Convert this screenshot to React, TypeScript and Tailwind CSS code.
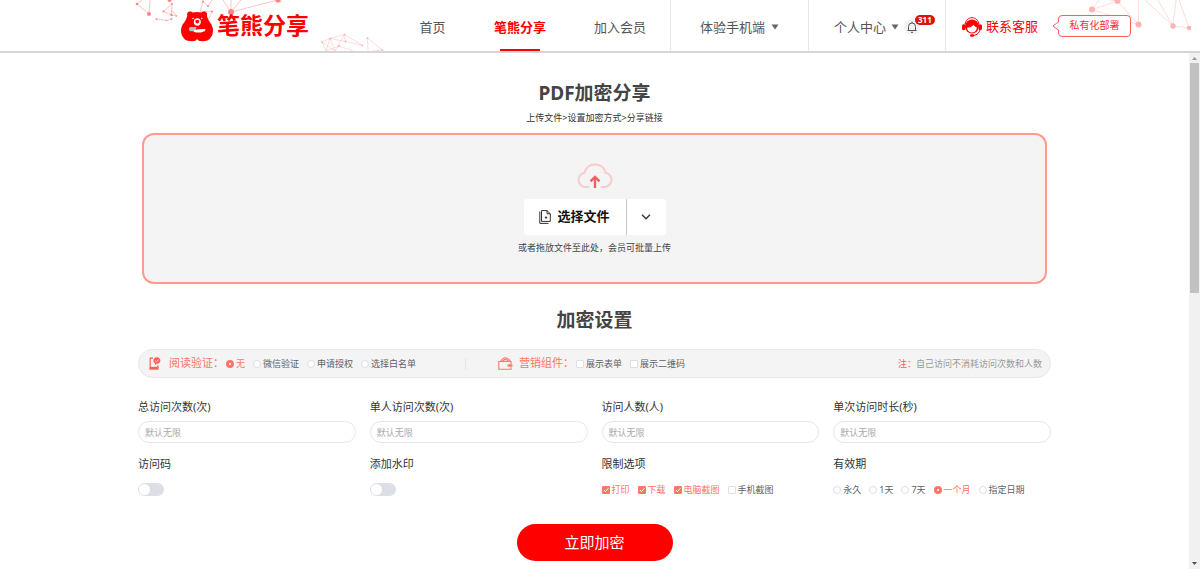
import React from "react";

function Mesh({ dots, lines }: { dots: number[][]; lines: string[] }) {
  return (
    <>
      {lines.map((d) => (
        <path key={d} d={d} fill="none" stroke="currentColor" strokeWidth="0.8" opacity="0.6" />
      ))}
      {dots.map(([x, y, r]) => (
        <circle key={`${x}-${y}`} cx={x} cy={y} r={r} fill="currentColor" />
      ))}
    </>
  );
}

function HeaderDecoration() {
  return (
    <div aria-hidden="true" className="pointer-events-none absolute inset-0 flex justify-between overflow-hidden">
      <svg width="400" height="51" viewBox="0 0 400 51" className="shrink-0">
        <g className="text-[#ff8585]">
          <Mesh
            dots={[[137, 4, 1.3], [149, 14, 2], [169.5, 0, 2], [172, 4, 1], [163.5, 11.5, 1], [171.5, 15, 1.2], [176.5, 16, 0.8], [156.5, 19, 0.9], [166.5, 20.5, 0.8], [171.5, 19, 0.9], [203, 1.5, 1], [208, 6, 1], [212, 11.5, 1], [231, 12, 3], [278, 0, 2.6]]}
            lines={["M137 4L149 14L150 0M137 4L142 0", "M172 4L163.5 11.5L171.5 15L172 4M171.5 15L176.5 16L171.5 10", "M156.5 19L166.5 20.5L171.5 19", "M200 11L203 1.5L208 6L212 0M200 11L212 11.5L208 20", "M231 12L223 0M231 12L231 0M231 12L241 0M231 12L278 0M278 0L282 2"]}
          />
        </g>
        <g className="text-[#ffb5b5]">
          <Mesh
            dots={[[322, 42, 0.9], [330, 38.5, 0.9], [344.5, 34.5, 0.9], [345.5, 41.5, 0.9], [339, 46, 0.9], [362.5, 45.5, 0.9], [367.5, 38, 0.9], [382.5, 50, 0.9]]}
            lines={["M322 42L330 38.5L344.5 34.5L362.5 45.5L345.5 41.5L344.5 34.5L335 51L330 38.5L326 51L322 42L335 51", "M330 38.5L345.5 41.5M326 51L339 46L353 51", "M367.5 38L368 51M367.5 38L382.5 50L372 51"]}
          />
        </g>
      </svg>
      <svg width="115" height="51" viewBox="1085 0 115 51" className="shrink-0 text-[#ffb3b3]">
        <Mesh
          dots={[[1092, 9.5, 3], [1117.5, 1, 3], [1138.5, 24.5, 3], [1173, 26, 2.7], [1189, 28, 2.2]]}
          lines={["M1099 0L1092 9.5L1117.5 1L1138.5 24.5V0", "M1092 9.5L1138.5 24.5", "M1110 0L1117.5 1", "M1145 0L1173 26L1158 0", "M1173 26L1176 0M1173 26L1189 28L1179 0"]}
        />
      </svg>
    </div>
  );
}

function BearLogo() {
  return (
    <svg width="32" height="32" viewBox="0 0 32 32" aria-hidden="true" className="shrink-0">
      <path
        fill="#fe0000"
        d="M6.300 5.600C5.400 2.800 7.600.900 10 1.600c.8.200 1.400.5 1.900.9 2.700-.8 5.700-.8 8.400 0 .5-.4 1.100-.7 1.900-.9 2.400-.7 4.600 1.200 3.700 4 .5 2.200 1.300 4.300 2.800 6.400C30.800 14.500 32 17.500 32 20.500c0 5-2.800 9.200-6.500 10.300-2.900.7-5.700.6-7.500 0-1-.5-1.300-1.600-1.900-1.600s-.9 1.100-1.900 1.600c-1.800.6-4.600.7-7.500 0C2.900 29.700 0 25.500 0 20.500c0-3 1.300-6 3.500-8.500 1.500-2.100 2.300-4.200 2.800-6.400Z"
      />
      <circle cx="12" cy="8.500" r="0.700" fill="#fff" />
      <circle cx="20.800" cy="8.500" r="0.700" fill="#fff" />
      <ellipse cx="16.300" cy="12" rx="3.500" ry="3.700" fill="#fff" />
      <path d="M14.300 11c0-1.200 4-1.200 4 0 0 1.300-1.100 2.600-2 2.600s-2-1.300-2-2.600Z" fill="#fe0000" />
      <path d="M8 18.800c0-1.500 1.200-2 3-1.800h4.500l-1 4.200H9.500c-1 0-1.500-.9-1.500-2.400Z" fill="#bdbdbd" />
      <path d="M12.500 20.500l4.500-1.200 7.500-.3c0 1.500-1 2.600-2.500 2.800l-2 .7h-4.500c-2 0-3-.8-3-2Z" fill="#fff" />
    </svg>
  );
}

function Caret() {
  return (
    <svg width="8" height="6" viewBox="0 0 8 6" aria-hidden="true">
      <path d="M.5.5h7L4 5.500Z" fill="#666" />
    </svg>
  );
}

function ServiceIcon() {
  return (
    <svg width="20" height="20" viewBox="0 0 20 20" aria-hidden="true">
      <path d="M3 7.500C3.400 3.300 6.400.700 10 .700s6.600 2.600 7 6.800" fill="none" stroke="#fe0000" strokeWidth="1" />
      <circle cx="10" cy="9.500" r="6.900" fill="#fe0000" />
      <path d="M5 10.800c2.700-.2 5.200-1.300 6.600-3.100.8 1.300 1.900 2.300 3.300 2.800-.2 3.100-2.300 5.100-4.900 5.100s-4.700-1.900-5-4.800Z" fill="#fff" />
      <rect x="0" y="7.200" width="3.400" height="6" rx="1.600" fill="#fe0000" />
      <rect x="16.600" y="7.200" width="3.400" height="6" rx="1.600" fill="#fe0000" />
      <path d="M18 12.500c-.5 3.300-2.800 5.500-6.500 6" fill="none" stroke="#fe0000" strokeWidth="1" />
      <rect x="8" y="17.300" width="4.200" height="2.500" rx="1.200" fill="#fe0000" />
    </svg>
  );
}

function Choice({ type, name, label, checked }: { type: "radio" | "checkbox"; name: string; label: string; checked?: boolean }) {
  return (
    <label className="flex cursor-pointer items-center gap-[2px] whitespace-nowrap text-[9px] leading-3 text-[#606266] has-[:checked]:text-[#ff7567]">
      {type === "radio" ? (
        <input
          type="radio"
          name={name}
          defaultChecked={checked}
          className="size-2 shrink-0 appearance-none rounded-full border border-[#dcdfe6] bg-white checked:border-[3px] checked:border-[#ff7567]"
        />
      ) : (
        <span className="grid shrink-0">
          <input
            type="checkbox"
            name={name}
            defaultChecked={checked}
            className="peer col-start-1 row-start-1 size-2 appearance-none rounded-[1px] border border-[#dcdfe6] bg-white checked:border-[#ff7567] checked:bg-[#ff7567]"
          />
          <svg viewBox="0 0 8 8" aria-hidden="true" className="pointer-events-none invisible col-start-1 row-start-1 size-2 peer-checked:visible">
            <path d="M1.800 4l1.600 1.600L6.300 2.400" fill="none" stroke="#fff" strokeWidth="1" />
          </svg>
        </span>
      )}
      {label}
    </label>
  );
}

function NumberField({ id, label }: { id: string; label: string }) {
  return (
    <div className="flex flex-col gap-[6px]">
      <label htmlFor={id} className="text-[11px] leading-4 text-[#333]">
        {label}
      </label>
      <input
        id={id}
        type="text"
        placeholder="默认无限"
        className="h-[22px] w-full rounded-full border border-[#e4e6eb] bg-white px-[6px] text-[9px] text-[#606266] placeholder:text-[#a8a8ab]"
      />
    </div>
  );
}

function SwitchField({ id, label }: { id: string; label: string }) {
  return (
    <div className="flex flex-col gap-[11px]">
      <label htmlFor={id} className="text-[11px] leading-4 text-[#333]">
        {label}
      </label>
      <input
        id={id}
        type="checkbox"
        role="switch"
        className="flex h-[13px] w-[26px] cursor-pointer appearance-none items-center rounded-full bg-[#dcdfe6] px-[1px] before:size-[11px] before:rounded-full before:bg-white checked:justify-end checked:bg-[#ff7567]"
      />
    </div>
  );
}

function ChoiceField({ label, children }: { label: string; children: React.ReactNode }) {
  return (
    <fieldset className="min-w-0">
      <legend className="mb-[11px] text-[11px] leading-4 text-[#333]">{label}</legend>
      <div className="flex h-[13px] items-center gap-2">{children}</div>
    </fieldset>
  );
}

function Header() {
  return (
    <header className="relative h-[53px] shrink-0 border-b-2 border-[#d6d6d6] bg-white">
      <HeaderDecoration />
      <div className="relative flex h-full pl-[15%] text-[13px] whitespace-nowrap text-[#555]">
        <a href="#home" className="ml-px flex w-[214px] shrink-0 items-center gap-1 text-[23px] font-bold text-[#fe0000]">
          <BearLogo />
          <span>笔熊分享</span>
        </a>
        <nav className="flex shrink-0 leading-5">
          <a href="#home" className="flex w-[75px] items-center justify-center pt-[2px]">首页</a>
          <a href="#share" aria-current="page" className="flex w-[100px] flex-col items-center font-bold text-[#fe0000]">
            <span className="flex flex-1 items-center pt-1">笔熊分享</span>
            <span className="h-[2px] w-10 bg-[#fe0000]" />
          </a>
          <a href="#vip" className="flex w-[100px] items-center justify-center pt-[2px]">加入会员</a>
          <a href="#mobile" className="flex w-[138px] items-center justify-center gap-[6px] border-l border-[#e8e8e8] pt-[2px]">
            体验手机端
            <Caret />
          </a>
          <div className="flex w-[138px] items-center justify-end border-x border-[#e8e8e8] pt-[2px] pr-[25px]">
            <a href="#user" className="flex items-center gap-[5px]">
              个人中心
              <Caret />
            </a>
            <button type="button" aria-label="消息" className="relative ml-[5px] grid size-4 place-items-center rounded-full bg-[#f2f2f2]">
              <svg width="12" height="12" viewBox="0 0 12 12" aria-hidden="true" fill="none" stroke="#555" strokeWidth="1">
                <path d="M1.500 9.500h9M2.500 9.500V5.500a3.500 3.500 0 0 1 7 0v4M6 2V.6M5 11.300h2" />
              </svg>
              <span className="absolute -top-1 left-[11px] rounded-full bg-[#d9150b] px-[3px] text-[8px] leading-[10px] font-bold text-white">311</span>
            </button>
          </div>
        </nav>
        <a href="#service" className="ml-4 flex shrink-0 items-center gap-1 pt-[2px] text-[#fe0000]">
          <ServiceIcon />
          联系客服
        </a>
        <a href="#deploy" className="ml-[14px] flex shrink-0 items-center text-[10px] text-[#fe2d2d]">
          <svg width="7" height="22" viewBox="0 0 7 22" aria-hidden="true" className="relative z-10 -mr-px">
            <path d="M7 6.500L1 11l6 4.500" fill="#fff" stroke="#ff5c5c" strokeWidth="1" />
          </svg>
          <span className="flex h-[22px] w-[73px] items-center justify-center rounded-[4px] border border-[#ff5c5c] bg-white">私有化部署</span>
        </a>
      </div>
    </header>
  );
}

function UploadPanel() {
  return (
    <section className="mx-1 mt-2 flex h-[151px] flex-col items-center rounded-[12px] border-2 border-[#ff9a91] bg-[#f4f4f4] pt-7">
      <svg width="36" height="26" viewBox="0 0 36 26" aria-hidden="true" fill="none" strokeLinecap="round">
        <path d="M11.500 24H8.500A7.200 7.200 0 0 1 7.500 9.700C9 4.500 13 1.500 18 1.500s9.200 3 10.500 8.200A7.200 7.200 0 0 1 27.500 24h-3" stroke="#f7cccc" strokeWidth="2" />
        <path d="M18 25V14M13.500 18.300L18 14l4.500 4.300" stroke="#ec6161" strokeWidth="2.400" strokeLinecap="butt" />
      </svg>
      <div className="mt-[10px] flex h-9 rounded-[3px] bg-white">
        <button type="button" className="flex w-[102px] items-center justify-center gap-[6px] text-[13px] font-bold text-[#111]">
          <svg width="12" height="14" viewBox="0 0 12 14" aria-hidden="true" fill="none" stroke="#333" strokeWidth="1">
            <path d="M2.500 .6h5.500l3.300 3.200v7.600H2.500ZM8 .6v3.200h3.300M.8 1.500v11.900h8.700M7 6.400v2.400M5.800 7.600h2.400" />
          </svg>
          选择文件
        </button>
        <button type="button" aria-label="更多上传方式" className="grid w-10 place-items-center border-l border-[#c9c9c9]">
          <svg width="10" height="6" viewBox="0 0 10 6" aria-hidden="true">
            <path d="M1 .8l4 4 4-4" fill="none" stroke="#333" strokeWidth="1.300" />
          </svg>
        </button>
      </div>
      <p className="mt-[6px] text-[9px] leading-[14px] text-[#444]">或者拖放文件至此处，会员可批量上传</p>
    </section>
  );
}

function VerifyBar() {
  return (
    <div className="mt-[17px] flex h-[29px] items-center rounded-full border border-[#e8e8e8] bg-[#f4f4f4] pr-2 pl-[9px]">
      <div role="group" aria-label="阅读验证" className="flex h-3 w-[318px] shrink-0 items-center border-r border-[#e4e4e4]">
        <svg width="13" height="13" viewBox="0 0 13 13" aria-hidden="true" className="shrink-0">
          <path d="M5 1.200H2.200v10.600h7.600V8.500" fill="none" stroke="#ff6052" strokeWidth="1.200" />
          <path d="M1.600 9.800h8.800v2.600H1.600Z" fill="#ff6052" />
          <path d="M8.800.3c2.100 0 3.600 1.300 3.600 3.200S10.900 6.700 8.900 6.700l-1.900 1.600.1-2C6 5.700 5.300 4.700 5.300 3.500 5.300 1.600 6.800.3 8.800.3Z" fill="#ff6052" />
          <path d="M7.200 3.400l1.300 1.300 2.300-2.200" fill="none" stroke="#f4f4f4" strokeWidth="0.800" />
        </svg>
        <span className="ml-2 text-[11px] whitespace-nowrap text-[#ff7567]">阅读验证：</span>
        <div className="ml-[2px] flex items-center gap-2">
          <Choice type="radio" name="verify" label="无" checked />
          <Choice type="radio" name="verify" label="微信验证" />
          <Choice type="radio" name="verify" label="申请授权" />
          <Choice type="radio" name="verify" label="选择白名单" />
        </div>
      </div>
      <div role="group" aria-label="营销组件" className="ml-8 flex items-center">
        <svg width="15" height="13" viewBox="0 0 15 13" aria-hidden="true" fill="none" stroke="#ff7567" strokeWidth="1.100" className="shrink-0">
          <path d="M13 7V4.500H.8v7.700H13v-2M2.500 4.300C4 2 5.500.7 7.500.7S11 2 12.500 4.300M4.500 4.300C5.500 3 6.500 2.400 7.500 2.400S9.500 3 10.500 4.300" />
          <path d="M14.400 7.200H10.800a1.300 1.300 0 0 0 0 2.600h3.600Z" fill="#ff7567" stroke="none" />
        </svg>
        <span className="ml-[6px] text-[11px] whitespace-nowrap text-[#ff7567]">营销组件：</span>
        <div className="ml-[2px] flex items-center gap-2">
          <Choice type="checkbox" name="form" label="展示表单" />
          <Choice type="checkbox" name="qrcode" label="展示二维码" />
        </div>
      </div>
      <p className="ml-auto text-[9px] whitespace-nowrap text-[#999]">
        <span className="text-[#ff6052]">注：</span>自己访问不消耗访问次数和人数
      </p>
    </div>
  );
}

function ScrollRail() {
  return (
    <div aria-hidden="true" className="flex w-[11px] shrink-0 flex-col items-center bg-[#f1f1f1] py-1">
      <svg width="5" height="3" viewBox="0 0 5 3"><path d="M0 3h5L2.500 0Z" fill="#999" /></svg>
      <div className="mt-[3px] h-[230px] w-[9px] bg-[#c1c1c1]" />
      <svg width="5" height="3" viewBox="0 0 5 3" className="mt-auto"><path d="M0 0h5L2.500 3Z" fill="#505050" /></svg>
    </div>
  );
}

export default function App() {
  return (
    <div lang="zh-CN" className="flex min-h-screen flex-col bg-white font-['Noto_Sans','Noto_Sans_CJK_SC',sans-serif] text-[#333]">
      <Header />
      <div className="flex flex-1">
        <main className="min-w-0 flex-1">
          <div className="mx-auto w-full max-w-[913px] pt-7">
            <h1 className="text-center text-[19px] leading-6 font-bold text-[#444]">PDF加密分享</h1>
            <p className="mt-[6px] text-center text-[9px] leading-[14px]">上传文件&gt;设置加密方式&gt;分享链接</p>
            <UploadPanel />
            <form>
              <h2 className="mt-6 text-center text-[19px] leading-6 font-bold text-[#444]">加密设置</h2>
              <VerifyBar />
              <div className="mt-[21px] grid grid-cols-4 gap-x-[14px] gap-y-[13px]">
                <NumberField id="total-visits" label="总访问次数(次)" />
                <NumberField id="person-visits" label="单人访问次数(次)" />
                <NumberField id="visitors" label="访问人数(人)" />
                <NumberField id="duration" label="单次访问时长(秒)" />
                <SwitchField id="access-code" label="访问码" />
                <SwitchField id="watermark" label="添加水印" />
                <ChoiceField label="限制选项">
                  <Choice type="checkbox" name="print" label="打印" checked />
                  <Choice type="checkbox" name="download" label="下载" checked />
                  <Choice type="checkbox" name="pc-capture" label="电脑截图" checked />
                  <Choice type="checkbox" name="phone-capture" label="手机截图" />
                </ChoiceField>
                <ChoiceField label="有效期">
                  <Choice type="radio" name="expiry" label="永久" />
                  <Choice type="radio" name="expiry" label="1天" />
                  <Choice type="radio" name="expiry" label="7天" />
                  <Choice type="radio" name="expiry" label="一个月" checked />
                  <Choice type="radio" name="expiry" label="指定日期" />
                </ChoiceField>
              </div>
              <button type="button" className="mx-auto mt-7 mb-2 block h-[37px] w-[156px] rounded-full bg-[#fe0000] text-[15px] text-white">
                立即加密
              </button>
            </form>
          </div>
        </main>
        <ScrollRail />
      </div>
    </div>
  );
}
